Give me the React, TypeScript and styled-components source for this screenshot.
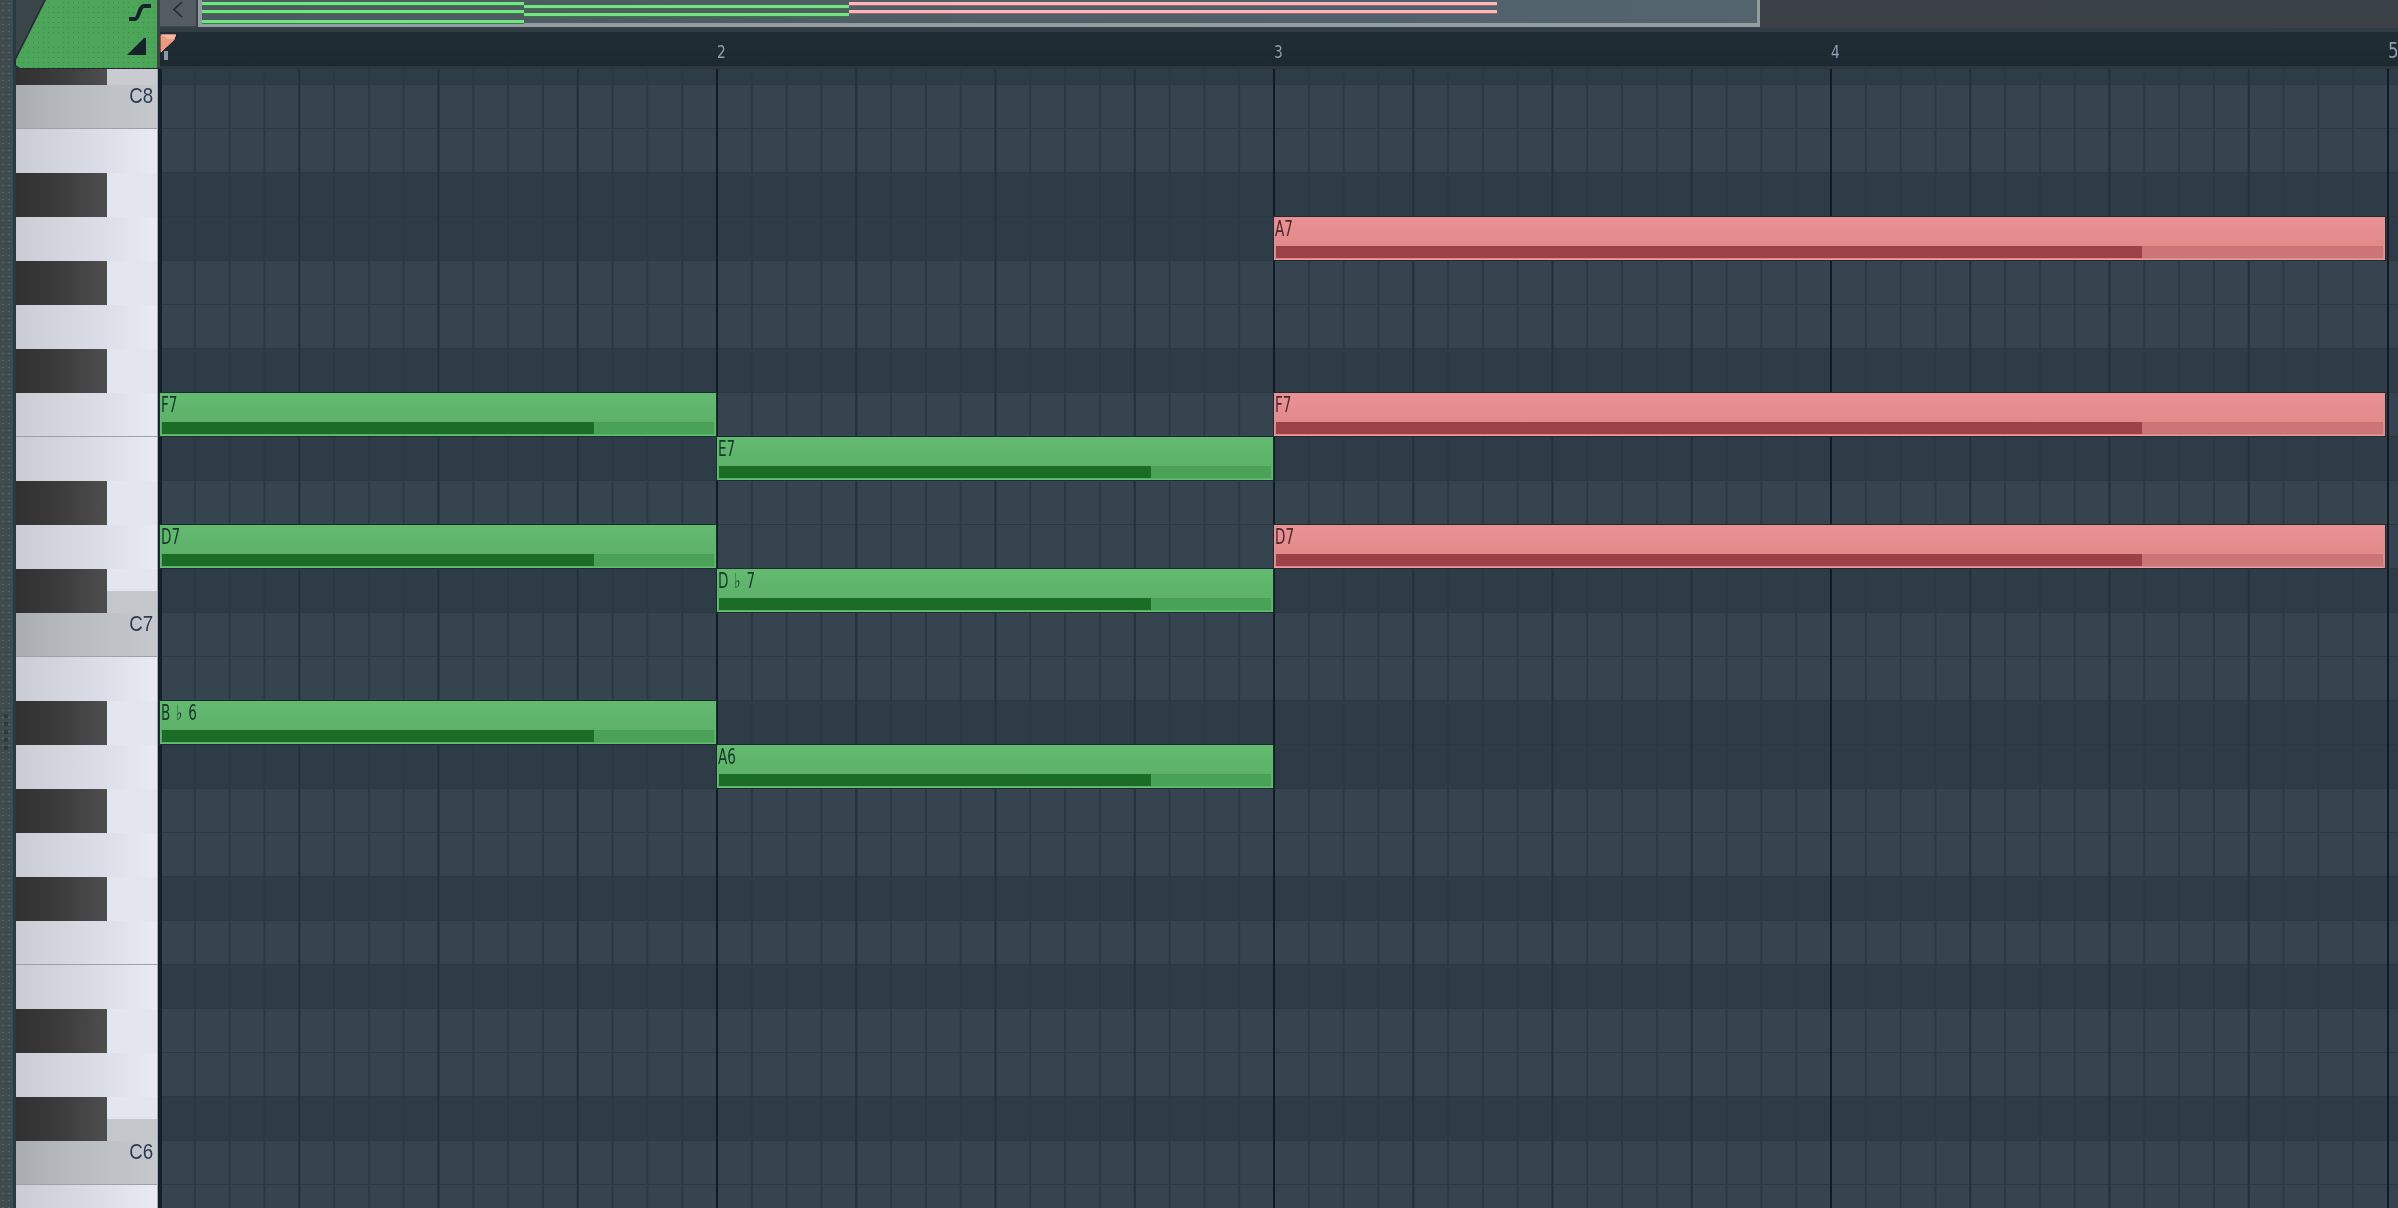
import React from "react";
import styled, { createGlobalStyle } from "styled-components";

const GlobalStyle = createGlobalStyle`
  html, body { margin: 0; padding: 0; background: #2d3c47; overflow: hidden; }
  #root { width: 2398px; height: 1208px; }
`;

type Tone = "green" | "pink";
const ROW_H = 44.02;
const BAR_W = 557;
const BAR_2_X = 554.5; // note start of bar 2, measured from the left edge of the roll
const LINE_2_X = 554; // bar 2 line, measured from the left edge of the roll

const Page = styled.div`
  display: flex;
  width: 2398px;
  height: 1208px;
  overflow: hidden;
  font-family: "DejaVu Sans Condensed", "DejaVu Sans", sans-serif;
`;
const LeftStrip = styled.div`
  flex: 0 0 16px;
  box-sizing: border-box;
  border-right: 3px solid #2a3a42;
  padding: 714px 0 0 4px;
  display: flex;
  flex-direction: column;
  gap: 4px;
  background-color: #404b4f;
  background-image: radial-gradient(circle, #56636a 0.6px, transparent 0.9px);
  background-size: 6px 7px;
`;
const GripDot = styled.span`
  width: 4px;
  height: 4px;
  background: #2d393e;
`;
const Main = styled.div`
  flex: 1;
  display: flex;
  flex-direction: column;
  min-width: 0;
`;
const Header = styled.div`
  flex: 0 0 69px;
  display: flex;
`;
const Corner = styled.div`
  flex: 0 0 144px;
  box-sizing: border-box;
  height: 69px;
  padding-right: 3px;
  background: #3a464a;
`;
const TabShadow = styled.div`
  filter: drop-shadow(-2px 0 0 #232f36);
`;
const GreenTab = styled.div`
  box-sizing: border-box;
  width: 141px;
  height: 68px;
  padding: 0 4px 0 0;
  display: flex;
  flex-direction: column;
  align-items: flex-end;
  background-color: #4ca659;
  background-image: radial-gradient(circle, #3d8a4b 0.6px, transparent 1px);
  background-size: 5px 5px;
  clip-path: polygon(30px 0, 100% 0, 100% 100%, 4px 100%, 0 96%, 0 88%);
`;
const CornerFoot = styled.div`
  height: 1px;
  margin-right: -3px;
  background: #1f2c34;
`;
const RampIcon = styled.svg`
  margin-top: 8px;
`;
const HeaderRight = styled.div`
  flex: 1;
  min-width: 0;
  display: flex;
  flex-direction: column;
`;
const TopRow = styled.div`
  flex: 0 0 28px;
  display: flex;
  gap: 2px;
  background: linear-gradient(90deg, #3a3f45, #3b4247);
`;
const BackButton = styled.div`
  flex: 0 0 36px;
  height: 27px;
  box-sizing: border-box;
  display: flex;
  align-items: flex-start;
  justify-content: center;
  padding-top: 1px;
  background: #525c62;
  border-bottom: 1px solid #3a444b;
`;
const Overview = styled.div`
  flex: 0 0 1562px;
  box-sizing: border-box;
  height: 27px;
  display: flex;
  background: linear-gradient(90deg, #4b5a61, #54646c);
  border-style: solid;
  border-color: #929da1;
  border-width: 0 3px 4px 4px;
`;
const MiniColumn = styled.div<{ $w: number }>`
  flex: 0 0 ${(p) => p.$w}px;
  display: flex;
  flex-direction: column;
`;
const MiniLine = styled.div<{ $tone: Tone; $mt: number }>`
  height: 3px;
  margin-top: ${(p) => p.$mt}px;
  background: ${(p) => (p.$tone === "green" ? "#70e67f" : "#ffb4ba")};
  box-shadow: 0 1px 0 ${(p) => (p.$tone === "green" ? "#3a7a4a" : "#96686e")};
`;
const HeaderGap = styled.div`
  flex: 0 0 4px;
  background: #313d44;
`;
const Ruler = styled.div`
  flex: 1;
  box-sizing: border-box;
  display: flex;
  background: linear-gradient(180deg, #212d35, #1c2931);
  border-bottom: 3px solid #2c383e;
`;
const RulerCell = styled.div`
  flex: 0 0 ${BAR_W}px;
  position: relative;
  box-sizing: border-box;
  padding-top: 8px;
`;
const RulerNum = styled.span<{ $big?: boolean }>`
  display: inline-block;
  font-size: ${(p) => (p.$big ? 22 : 18)}px;
  line-height: 24px;
  margin-top: ${(p) => (p.$big ? -1 : 0)}px;
  color: #8b9fae;
  transform: scaleX(0.85);
  transform-origin: left center;
`;
const Playhead = styled.svg`
  position: absolute;
  left: 0;
  top: 2px;
`;
const Body = styled.div`
  flex: 1;
  min-height: 0;
  display: flex;
`;
const Keys = styled.div`
  flex: 0 0 141px;
  display: flex;
  flex-direction: column;
  overflow: hidden;
`;
const WHITE = "linear-gradient(90deg, #c9ccd3, #d8dbe3 50%, #e8ebf4)";
const GREY = "linear-gradient(90deg, #a9adb2, #b9bdc2 45%, #c5c8cd)";
const KeyRow = styled.div<{ $root?: boolean; $edge?: boolean; $h: number }>`
  flex: 0 0 ${(p) => p.$h}px;
  box-sizing: border-box;
  display: flex;
  justify-content: flex-end;
  background: ${(p) => (p.$root ? GREY : WHITE)};
  border-bottom: ${(p) => (p.$edge ? "1px solid #9da1a8" : "0")};
`;
const BlackKeyRow = styled.div<{ $h: number }>`
  flex: 0 0 ${(p) => p.$h}px;
  display: flex;
`;
const BlackKey = styled.div`
  flex: 0 0 91px;
  background: linear-gradient(90deg, #303030, #3c3c3c 50%, #4e4e4e);
`;
const BlackKeyTail = styled.div<{ $next: boolean; $full?: boolean }>`
  flex: 1;
  background: ${(p) =>
    p.$full
      ? "#c8cbd0"
      : p.$next
      ? "linear-gradient(180deg, #e3e6ee 50%, #c3c6cb 50%)"
      : "#e3e6ee"};
`;
const KeyLabel = styled.span`
  display: inline-block;
  font-family: "Liberation Sans", sans-serif;
  font-size: 22px;
  line-height: 24px;
  height: 24px;
  margin: -1px 4px 0 0;
  color: #2a3d4f;
  transform: scaleX(0.85);
  transform-origin: right center;
`;
const Divider = styled.div`
  flex: 0 0 5px;
  box-sizing: border-box;
  border-left: 1px solid #a3abb0;
  background: #12202a;
`;
const Roll = styled.div`
  flex: 1;
  min-width: 0;
  position: relative;
  display: flex;
  flex-direction: column;
`;
const GridRow = styled.div<{ $dark: boolean; $h: number }>`
  flex: 0 0 ${(p) => p.$h}px;
  box-sizing: border-box;
  background: ${(p) => (p.$dark ? "#2d3c47" : "#35444e")};
  border-bottom: 1px solid #2b3944;
`;
const GridLines = styled.div`
  position: absolute;
  inset: 0;
  background-image:
    linear-gradient(90deg, #0f1c24 2px, transparent 2px),
    linear-gradient(90deg, #22323c 2px, transparent 2px),
    linear-gradient(90deg, #2a3944 2px, transparent 2px);
  background-size: ${BAR_W}px 100%, ${BAR_W / 4}px 100%, ${BAR_W / 16}px 100%;
  background-position: ${LINE_2_X - BAR_W}px 0, ${LINE_2_X - BAR_W}px 0, ${LINE_2_X - BAR_W}px 0;
`;
const NoteBox = styled.div<{ $tone: Tone }>`
  position: absolute;
  box-sizing: border-box;
  height: 43px;
  display: flex;
  flex-direction: column;
  overflow: hidden;
  padding: 0 1px 1px;
  border: 1px solid ${(p) => (p.$tone === "green" ? "#5bbd68" : "#e88f91")};
  border-bottom-color: ${(p) => (p.$tone === "green" ? "#60c26d" : "#ee9c9e")};
  box-shadow: 0 0 0 1px #1e2b33;
  background: ${(p) =>
    p.$tone === "green"
      ? "linear-gradient(180deg, #64ba70, #5aad66)"
      : "linear-gradient(180deg, #ea9293, #dd8686)"};
  color: ${(p) => (p.$tone === "green" ? "#16382a" : "#4f252d")};
`;
const NoteLabel = styled.div`
  flex: 1;
  margin-left: -1px;
  font-size: 21px;
  line-height: 22px;
  white-space: nowrap;
  transform: scaleX(0.72);
  transform-origin: left center;
`;
const Flat = styled.span`
  margin: 0 8px;
`;
const VelocityTrack = styled.div<{ $tone: Tone }>`
  flex: 0 0 12px;
  background: ${(p) => (p.$tone === "green" ? "#49a256" : "#cc7579")};
`;
const VelocityFill = styled.div<{ $tone: Tone }>`
  height: 100%;
  background: ${(p) => (p.$tone === "green" ? "#1a6c26" : "#9b4147")};
`;

/* ── data ─────────────────────────────────────────────── */
// Rows listed from C8 downwards; the first visible row above them is the clipped C#8.
const names = ["C", "B", "A#", "A", "G#", "G", "F#", "F", "E", "D#", "D", "C#"];
const rows = Array.from({ length: 26 }, (_, i) => names[i % 12]);
const darkRows = new Set(["C#", "E", "F#", "A", "A#"]);
const octave = (i: number) => (i === 0 ? 8 : i <= 12 ? 7 : i <= 24 ? 6 : 5);

const notes: { label: string; flat?: [string, string]; row: number; bar: number; span: number; tone: Tone }[] = [
  { label: "F7", row: 7, bar: 0, span: 1, tone: "green" },
  { label: "D7", row: 10, bar: 0, span: 1, tone: "green" },
  { label: "", flat: ["B", "6"], row: 14, bar: 0, span: 1, tone: "green" },
  { label: "E7", row: 8, bar: 1, span: 1, tone: "green" },
  { label: "", flat: ["D", "7"], row: 11, bar: 1, span: 1, tone: "green" },
  { label: "A6", row: 15, bar: 1, span: 1, tone: "green" },
  { label: "A7", row: 3, bar: 2, span: 2, tone: "pink" },
  { label: "F7", row: 7, bar: 2, span: 2, tone: "pink" },
  { label: "D7", row: 10, bar: 2, span: 2, tone: "pink" },
];

const mini: { w: number; tone: Tone; tops: number[] }[] = [
  { w: 322, tone: "green", tops: [2, 5, 7] },
  { w: 325, tone: "green", tops: [5, 5] },
  { w: 648, tone: "pink", tops: [2, 5] },
];

export default function App() {
  return (
    <Page>
      <GlobalStyle />
      <LeftStrip>
        {[0, 1, 2, 3, 4].map((i) => (
          <GripDot key={i} />
        ))}
      </LeftStrip>
      <Main>
        <Header>
          <Corner>
            <TabShadow>
              <GreenTab>
                <svg width="30" height="26" viewBox="0 0 30 26">
                  <path d="M6 19 H12 C16 19 16 6 21 6 H28" fill="none" stroke="#15222b" strokeWidth="4" />
                </svg>
                <RampIcon width="30" height="24" viewBox="0 0 30 24">
                  <path d="M4 21 L21 4 Q23 3 23 5 V21 Z" fill="#15222b" />
                </RampIcon>
              </GreenTab>
            </TabShadow>
            <CornerFoot />
          </Corner>
          <HeaderRight>
            <TopRow>
              <BackButton>
                <svg width="12" height="18" viewBox="0 0 12 18">
                  <path d="M10 1 L2 8.5 L10 16" fill="none" stroke="#1f2a32" strokeWidth="1.6" />
                </svg>
              </BackButton>
              <Overview>
                {mini.map((m, i) => (
                  <MiniColumn key={i} $w={m.w}>
                    {m.tops.map((t, j) => (
                      <MiniLine key={j} $tone={m.tone} $mt={t} />
                    ))}
                  </MiniColumn>
                ))}
              </Overview>
            </TopRow>
            <HeaderGap />
            <Ruler>
              {[1, 2, 3, 4, 5].map((n) => (
                <RulerCell key={n}>
                  {n > 1 && <RulerNum $big={n === 5}>{n}</RulerNum>}
                  {n === 1 && (
                    <Playhead width="22" height="28" viewBox="0 0 22 28">
                      <rect x="4" y="17" width="4" height="9" fill="#8b9ba4" />
                      <path d="M0 0 H17 L15 6 L1 19 H0 Z" fill="#ef9a7e" stroke="#131d24" strokeWidth="1" />
                      <path d="M1 0.5 H16 L14 5 H8 Z" fill="#f7b7a6" />
                    </Playhead>
                  )}
                </RulerCell>
              ))}
            </Ruler>
          </HeaderRight>
        </Header>
        <Body>
          <Keys>
            <BlackKeyRow $h={16}>
              <BlackKey />
              <BlackKeyTail $next $full />
            </BlackKeyRow>
            {rows.map((n, i) =>
              n.includes("#") ? (
                <BlackKeyRow key={i} $h={ROW_H}>
                  <BlackKey />
                  <BlackKeyTail $next={n === "C#"} />
                </BlackKeyRow>
              ) : (
                <KeyRow key={i} $h={ROW_H} $root={n === "C"} $edge={n === "C" || n === "F"}>
                  {n === "C" && <KeyLabel>C{octave(i)}</KeyLabel>}
                </KeyRow>
              )
            )}
          </Keys>
          <Divider />
          <Roll>
            <GridRow $dark $h={16} />
            {rows.map((n, i) => (
              <GridRow key={i} $h={ROW_H} $dark={darkRows.has(n)} />
            ))}
            <GridLines />
            {notes.map((note, i) => {
              const left = note.bar === 0 ? -2 : BAR_2_X + (note.bar - 1) * BAR_W;
              const right = BAR_2_X + (note.bar + note.span - 1) * BAR_W - 1;
              return (
                <NoteBox
                  key={i}
                  $tone={note.tone}
                  style={{ left, width: note.span === 2 ? right - left - 2 : right - left, top: 16 + note.row * ROW_H }}
                >
                  <NoteLabel>
                    {note.flat ? (
                      <>
                        {note.flat[0]}
                        <Flat>♭</Flat>
                        {note.flat[1]}
                      </>
                    ) : (
                      note.label
                    )}
                  </NoteLabel>
                  <VelocityTrack $tone={note.tone}>
                    <VelocityFill $tone={note.tone} style={{ width: "78.3%" }} />
                  </VelocityTrack>
                </NoteBox>
              );
            })}
          </Roll>
        </Body>
      </Main>
    </Page>
  );
}
